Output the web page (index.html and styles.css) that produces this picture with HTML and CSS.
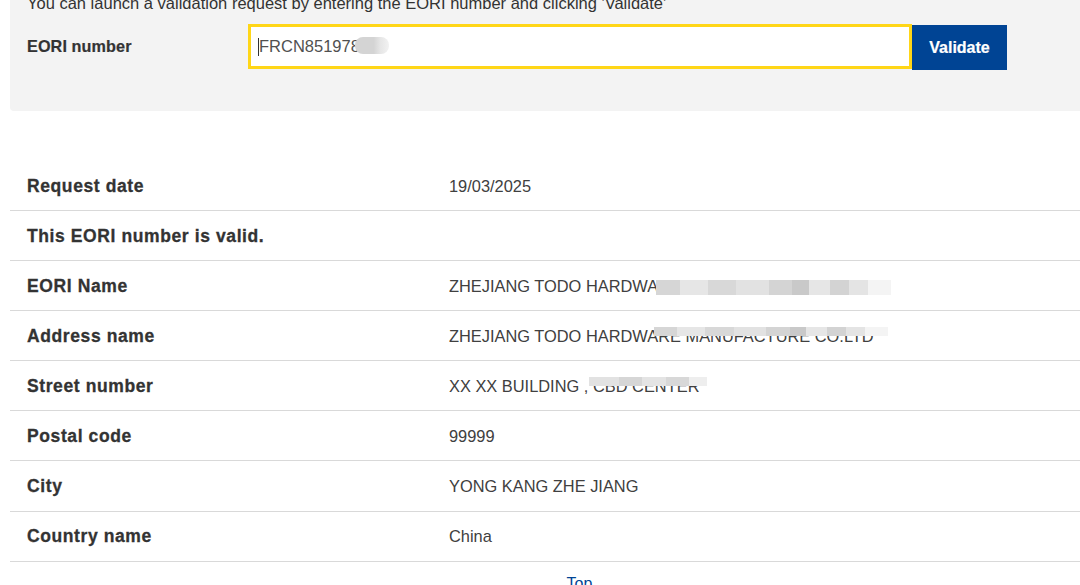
FILE: index.html
```html
<!DOCTYPE html>
<html>
<head>
<meta charset="utf-8">
<link rel="stylesheet" href="styles.css">
</head>
<body>
<div class="page">
  <section class="panel">
    <p class="intro">You can launch a validation request by entering the EORI number and clicking 'Validate'</p>
    <form class="form-row">
      <label class="form-label">EORI number</label>
      <div class="input"><span class="caret"></span>FRCN851978<span class="blob"></span></div>
      <button type="button" class="btn">Validate</button>
    </form>
  </section>

  <div class="results">
    <div class="row"><div class="lbl">Request date</div><div class="val">19/03/2025</div></div>
    <div class="row"><div class="lbl">This EORI number is valid.</div><div class="val"></div></div>
    <div class="row"><div class="lbl">EORI Name</div><div class="val">ZHEJIANG TODO HARDWA<span class="mosaic m1"></span></div></div>
    <div class="row"><div class="lbl">Address name</div><div class="val">ZHEJIANG TODO HARDWA<span class="hidden">RE MANUFACTURE CO.LTD<span class="mosaic-over m2"></span></span></div></div>
    <div class="row"><div class="lbl">Street number</div><div class="val">XX XX BUILDING , <span class="hidden">CBD CENTER<span class="mosaic-over m3"></span></span></div></div>
    <div class="row"><div class="lbl">Postal code</div><div class="val">99999</div></div>
    <div class="row"><div class="lbl">City</div><div class="val">YONG KANG ZHE JIANG</div></div>
    <div class="row"><div class="lbl">Country name</div><div class="val">China</div></div>
  </div>
  <div class="top-link"><a href="#">Top</a></div>
</div>
</body>
</html>
```

FILE: styles.css
```css
html, body {
  margin: 0;
  padding: 0;
  background: #ffffff;
  overflow: hidden;
}
body {
  font-family: "Liberation Sans", Arial, sans-serif;
  color: #404040;
  font-size: 16.5px;
}
.page {
  margin-left: 10px;
  width: 1090px;
}
.panel {
  margin-top: -15px;
  background: #f3f3f3;
  border-bottom-left-radius: 4px;
  padding: 8px 17px 41px;
}
.intro {
  margin: 0;
  line-height: 20px;
  color: #333333;
}
.form-row {
  display: flex;
  align-items: center;
  margin-top: 10px;
}
.form-label {
  width: 221px;
  font-weight: bold;
  color: #333333;
  font-size: 16.2px;
  letter-spacing: 0.1px;
  -webkit-text-stroke: 0.2px #333333;
}
.input {
  width: 664px;
  height: 45px;
  box-sizing: border-box;
  border: 3px solid #ffd617;
  background: #ffffff;
  display: flex;
  align-items: center;
  padding-left: 7px;
  color: #505050;
  font-size: 16.5px;
}
.caret {
  width: 1px;
  height: 18px;
  background: #333;
}
.blob {
  display: inline-block;
  width: 34px;
  height: 17px;
  border-radius: 8px;
  background: linear-gradient(90deg, #d4d4d4 0 55%, #e6e6e6 75%, #f2f2f2 100%);
  margin-left: -5px;
  margin-top: -2px;
}
.btn {
  width: 95px;
  height: 45px;
  margin-top: 2px;
  border: 0;
  background: #004494;
  color: #ffffff;
  font-family: "Liberation Sans", Arial, sans-serif;
  font-weight: bold;
  font-size: 16px;
  padding: 0;
  -webkit-text-stroke: 0.2px #ffffff;
}
.results {
  margin-top: 50px;
}
.row {
  display: grid;
  grid-template-columns: 422px 1fr;
  align-items: center;
  height: 50px;
  box-sizing: border-box;
  border-bottom: 1px solid #d9d9d9;
  padding-left: 17px;
  padding-top: 1px;
}
.row:nth-child(n+6) {
  height: 50.3px;
}
.lbl {
  font-weight: bold;
  color: #333333;
  font-size: 17.5px;
  letter-spacing: 0.6px;
  -webkit-text-stroke: 0.3px #333333;
}
.val {
  color: #404040;
  white-space: nowrap;
  font-size: 16.4px;
}
.mosaic {
  display: inline-block;
  vertical-align: middle;
  width: 235px;
  height: 15px;
  margin-left: -2px;
}
.m1 {
  background: linear-gradient(90deg,
    #d6d6d6 0 10%, #e6e6e6 10% 22%, #d8d8d8 22% 34%, #e2e2e2 34% 48%,
    #d4d4d4 48% 58%, #c9c9c9 58% 65%, #e6e6e6 65% 74%, #d3d3d3 74% 82%,
    #e4e4e4 82% 90%, #f4f4f4 90% 100%);
}
.hidden {
  position: relative;
}
.mosaic-over {
  position: absolute;
  left: -4px;
  right: -14px;
  top: 0;
  height: 9px;
}
.m2 {
  background: linear-gradient(90deg,
    #d6d6d6 0 10%, #e6e6e6 10% 22%, #d8d8d8 22% 34%, #e2e2e2 34% 48%,
    #d4d4d4 48% 58%, #c9c9c9 58% 65%, #e6e6e6 65% 74%, #d3d3d3 74% 82%,
    #e4e4e4 82% 90%, #f4f4f4 90% 100%);
}
.m3 {
  right: -8px;
  background: linear-gradient(90deg,
    #e2e2e2 0 25%, #d6d6d6 25% 45%, #e4e4e4 45% 65%, #d8d8d8 65% 85%, #eeeeee 85% 100%);
}
.top-link {
  text-align: center;
  padding-top: 12px;
  width: 1139px;
}
.top-link a {
  color: #004494;
  text-decoration: none;
  font-size: 16px;
}
```
